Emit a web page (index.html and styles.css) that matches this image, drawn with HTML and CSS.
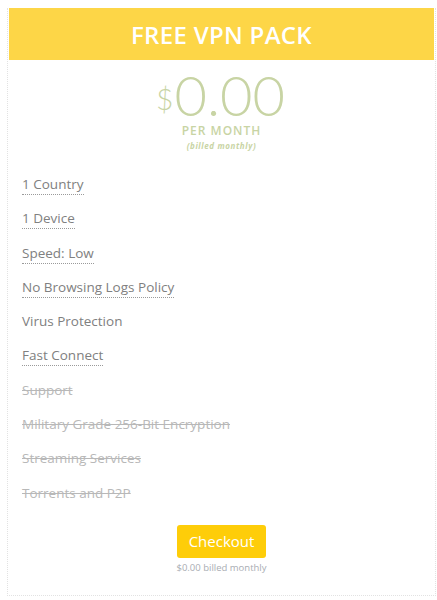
FILE: index.html
```html
<!DOCTYPE html>
<html>
<head>
<meta charset="utf-8">
<link rel="stylesheet" href="styles.css">
</head>
<body>
<div class="card">
  <div class="header">FREE VPN PACK</div>
  <div class="price">
    <div class="amount"><span class="cur">$</span>0.00</div>
    <div class="per">PER MONTH</div>
    <div class="billed">(billed monthly)</div>
  </div>
  <ul class="features">
    <li><span class="tip">1 Country</span></li>
    <li><span class="tip">1 Device</span></li>
    <li><span class="tip">Speed: Low</span></li>
    <li><span class="tip">No Browsing Logs Policy</span></li>
    <li><span>Virus Protection</span></li>
    <li><span class="tip">Fast Connect</span></li>
    <li class="off"><span>Support</span></li>
    <li class="off"><span>Military Grade 256-Bit Encryption</span></li>
    <li class="off"><span>Streaming Services</span></li>
    <li class="off"><span>Torrents and P2P</span></li>
  </ul>
  <div class="cta">
    <button class="checkout">Checkout</button>
    <div class="note">$0.00 billed monthly</div>
  </div>
</div>
</body>
</html>
```
FILE: styles.css
```css
html, body { margin: 0; padding: 0; background: #fff; }
body { font-family: "Open Sans", "Noto Sans", sans-serif; }
.card {
  margin: 8px 1px 0 7px;
  height: 588px;
  border: 1px dotted #e2e2e2;
  border-top: none;
  box-sizing: border-box;
  padding: 0 1px;
}
.header {
  background: #fdd647;
  color: #fff;
  height: 52px;
  display: flex;
  align-items: center;
  justify-content: center;
  font-size: 24px;
  font-weight: 600;
  letter-spacing: 0.3px;
}
.price { text-align: center; color: #c8d4a4; }
.amount {
  font-family: Lato, sans-serif;
  font-weight: 300;
  font-size: 56px;
  line-height: 48px;
  margin-top: 11px;
  margin-left: -2px;
}
.cur { font-size: 30px; vertical-align: 6px; margin-right: 1px; }
.per {
  font-size: 12px;
  font-weight: 600;
  letter-spacing: 1px;
  margin-top: 2px;
  line-height: 14px;
}
.billed {
  font-size: 8px;
  font-weight: 700;
  font-style: italic;
  letter-spacing: 0.6px;
  margin-top: 3px;
  line-height: 10px;
}
.features {
  list-style: none;
  margin: 24px 0 0 0;
  padding: 0 0 0 13px;
}
.features li {
  height: 34.3px;
  font-size: 13.5px;
  color: #808080;
  line-height: 18px;
}
.tip { border-bottom: 1px dotted #9a9a9a; padding-bottom: 1px; }
.off { color: #b8b8b8 !important; text-decoration: line-through; }
.cta {
  display: flex;
  flex-direction: column;
  align-items: center;
  margin-top: 7px;
}
.checkout {
  background: #fecd09;
  color: #fff;
  border: none;
  border-radius: 3px;
  width: 89px;
  height: 33px;
  font-family: "Open Sans", sans-serif;
  font-size: 15px;
  font-weight: 500;
  padding: 0;
}
.note {
  font-size: 9.5px;
  color: #a9adb3;
  margin-top: 3px;
}
```
